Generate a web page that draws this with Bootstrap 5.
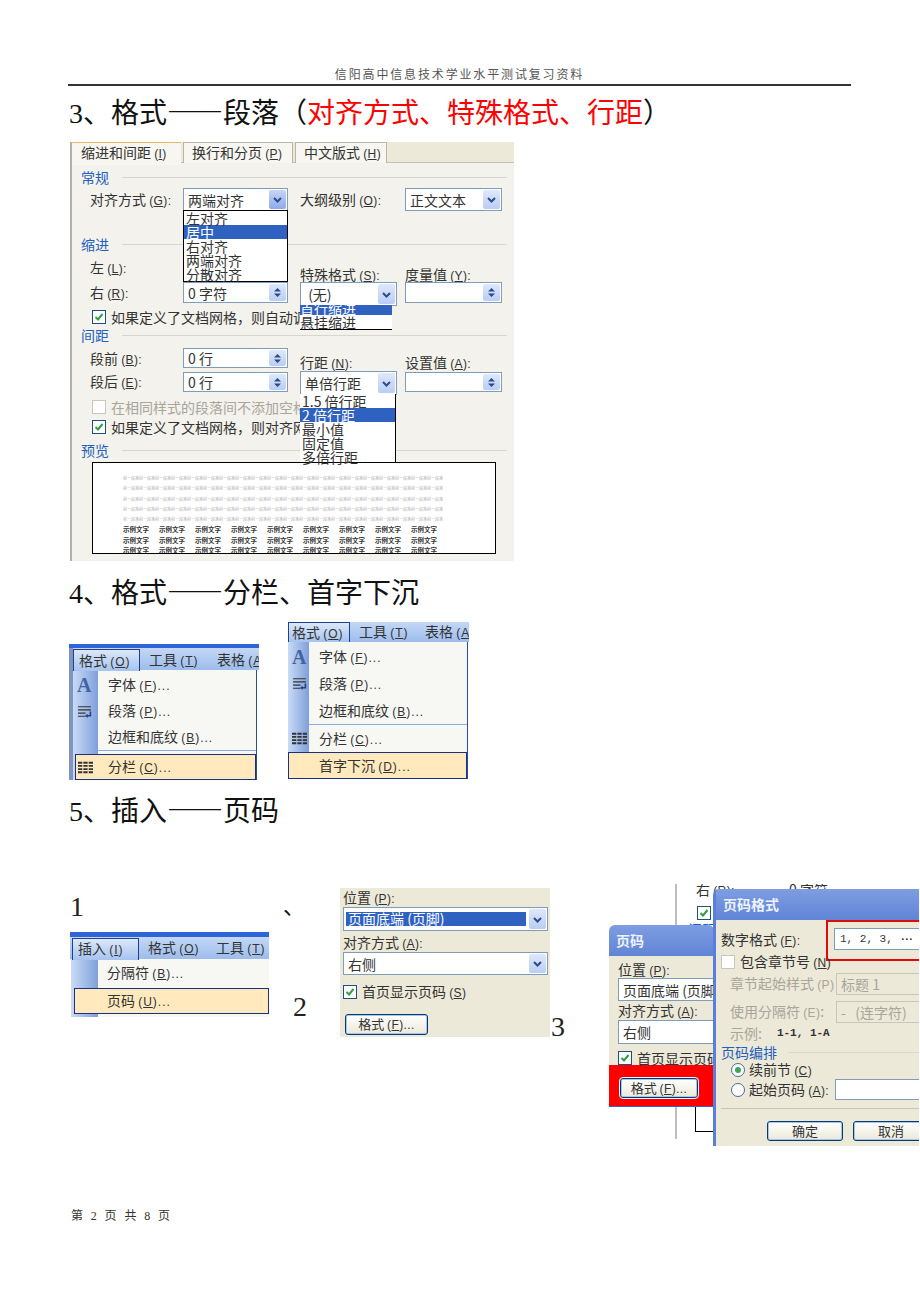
<!DOCTYPE html>
<html lang="zh">
<head>
  <meta charset="UTF-8">
  <title>信阳高中信息技术学业水平测试复习资料</title>
  <meta name="viewport" content="width=device-width, initial-scale=1">
  <link href="https://cdn.jsdelivr.net/npm/bootstrap@5.3.0/dist/css/bootstrap.min.css" rel="stylesheet">
  <style>
    body { background: #fff; color: #111; overflow-x: hidden; font-family: "Liberation Serif", "Noto Sans CJK SC", serif; }
    .page-wrap { width: 920px; min-height: 1302px; }
    .doc-head { height: 86px; margin: 0 69px 0 68px; padding-top: 66px; border-bottom: 2px solid #333; color: #555; font-size: 12px; line-height: 18px; letter-spacing: 1.85px; text-align: center; }
    .doc-h { margin: 0; padding-left: 69px; font-size: 28px; line-height: 40px; font-weight: 400; font-family: "Liberation Serif", "Noto Sans CJK SC", serif; }
    .doc-h-3 { margin-top: 5px; }
    .doc-h-4 { margin-top: 10px; }
    .doc-h-5 { margin-top: 9px; }
    .doc-dash { font-family: "Noto Sans CJK SC", sans-serif; }
    .doc-red { color: #f00; }
    .doc-foot { margin-top: 60px; padding-left: 71px; font-size: 12px; line-height: 20px; letter-spacing: 2.4px; color: #333; }
    .big-num { font-size: 28px; line-height: 28px; color: #222; }

    /* dialog pieces */
    .xp { font-family: "Noto Sans CJK SC", "Liberation Sans", sans-serif; font-size: 14px; line-height: 14px; color: #333; white-space: nowrap; }
    .hk { font-family: "Liberation Sans", sans-serif; font-size: 12px; letter-spacing: .4px; }
    .cbo { display: flex; align-items: center; background: #fff; border: 1px solid #7f9db9; position: relative; padding-left: 4px; }
    .cbo-btn { position: absolute; top: 1px; right: 1px; bottom: 1px; width: 17px; display: flex; align-items: center; justify-content: center; background: linear-gradient(#dfe8fb, #b9cdf5); border-radius: 2px; }
    .cbo-btn svg { width: 11px; height: 11px; }
    .cbo-hot { background: linear-gradient(#c6d5f8, #8fa9ea); }
    .ck { flex: none; width: 14px; height: 14px; border: 1px solid #1c5180; background: #fff; display: flex; align-items: center; justify-content: center; }
    .ck svg { width: 10px; height: 10px; }
    .ck-off { border-color: #c9c7bd; }
    .sec-row { display: flex; align-items: center; height: 14px; }
    .sec-name { width: 41px; flex: none; color: #1f5fbf; }
    .sec-line { flex-grow: 1; border-top: 1px solid #d8d6cd; }
    .tone-off { color: #a8a59b; }
    .xp-btn { padding: 0; border: 1px solid #003c74; border-radius: 3px; background: linear-gradient(#fff, #ece9d8); box-shadow: inset 0 0 0 1px #a9c4ee; font-size: 13px; line-height: 14px; color: #333; font-family: "Noto Sans CJK SC", sans-serif; }
    .sel-blue { background: #2f62c0; color: #fff; }

    /* paragraph dialog */
    .para-shot { width: 444px; height: 419px; margin-left: 70px; margin-top: 8px; overflow: hidden; background: #f3f2ec; border-left: 2px solid #b0b0b0; }
    .para-tabs { height: 21px; background: #ece9d8; border-bottom: 1px solid #c5c2b5; }
    .para-tab { height: 21px; padding: 2px 0 0 8px; margin-left: 2px; background: #f7f6f0; border: 1px solid #b8b6aa; border-bottom: 0; }
    .para-tab-on { height: 23px; margin-left: 0; padding: 2px 0 0 9px; background: #f7f6f0; border: 0; border-top: 1px solid #e9b96a; position: relative; }
    .tab-w1 { width: 109px; }
    .tab-w2 { width: 110px; }
    .tab-w3 { width: 92px; }
    .para-body { padding: 7px 7px 0 9px; }
    .pr { display: flex; padding-left: 9px; }
    .c1 { width: 93px; flex: none; }
    .c2 { width: 105px; flex: none; }
    .c3 { width: 97px; flex: none; margin-left: 12px; }
    .c4 { width: 97px; flex: none; margin-left: 8px; }
    .h-20 { height: 20px; }
    .h-21 { height: 21px; }
    .h-23 { height: 23px; }
    .h-24 { height: 24px; }
    .lh-20 { line-height: 20px; }
    .lh-23 { line-height: 23px; }
    .end-lab { padding-top: 7px; }
    .m1 { margin-top: 1px; }
    .m2 { margin-top: 2px; }
    .m3 { margin-top: 3px; }
    .m4 { margin-top: 4px; }
    .m5 { margin-top: 5px; }
    .m6 { margin-top: 6px; }
    .m7 { margin-top: 7px; }
    .m9 { margin-top: 9px; }
    .m26 { margin-top: 26px; }
    .m-sec { margin-top: 4px; }
    .ck-txt { margin-left: 5px; }
    .ck-row { display: flex; align-items: center; padding-left: 11px; height: 14px; }
    .ck-tall { height: 16px; }
    .pop { position: absolute; z-index: 3; background: #fff; left: -1px; top: 100%; }
    .pop-item { height: 14px; padding-left: 2px; line-height: 14px; }
    .pop-align { width: 105px; height: 72px; border: 1px solid #000; }
    .pop-special { width: 92px; height: 25px; border-bottom: 1px solid #000; overflow: hidden; }
    .pop-special .pop-clip { height: 10px; line-height: 6px; }
    .pop-special .pop-item { padding-left: 0; }
    .pop-space { width: 96px; height: 69px; border-right: 1px solid #000; border-bottom: 1px solid #000; }
    .prev-box { width: 404px; height: 92px; margin: 5px 0 0 11px; padding: 10px 0 0 30px; background: #fff; border: 1px solid #000; border-width: 1.5px; overflow: hidden; }
    .prev-gray { font-size: 4px; line-height: 10.3px; color: #b4b4b4; width: 324px; font-family: "Noto Sans CJK SC", sans-serif; white-space: nowrap; }
    .prev-dark { display: flex; font-size: 6.5px; line-height: 10.3px; color: #333; font-weight: 700; font-family: "Noto Sans CJK SC", sans-serif; white-space: nowrap; }
    .prev-dark span { width: 36px; flex: none; }

    /* office menus */
    .menu-row { display: flex; align-items: flex-end; margin-top: 7px; padding-left: 69px; gap: 28px; }
    .mn { overflow: hidden; position: relative; }
    .mn .hk { letter-spacing: 1px; }
    .mn-bar { display: flex; height: 22px; background: linear-gradient(#c4d8f6, #9dbcec); }
    .mn-tab { height: 22px; margin-top: 1px; padding: 3px 0 0 5px; background: linear-gradient(#dce8fa, #a6c3ef); border: 1px solid #1f3f8f; border-bottom: 0; flex: none; }
    .mn-top { padding-top: 4px; flex: none; }
    .mn-list { margin: 0; padding: 2px 0 0; list-style: none; border-right: 1px solid #2a4da0; background: linear-gradient(90deg, #c9dbf6, #7f9fdb var(--gut), #f7f7f4 var(--gut)); }
    .mn-item { display: flex; align-items: center; height: var(--item); }
    .mn-ico { flex: none; width: var(--ico); padding-left: 4px; display: flex; align-items: center; }
    .mn-a { font-family: "Liberation Serif", serif; font-weight: 700; font-size: 20px; color: #41649f; }
    .mn-ico svg { width: 15px; height: 15px; }
    .mn-sep { height: 1px; margin-left: var(--gut); background: #8faadc; }
    .mn-hot { background: #ffe9bd; border: 1px solid #1f2f80; margin-left: var(--hotm); }
    .mn-hot .mn-ico { width: var(--hoti); padding-left: 2px; }
    .fig-b { width: 190px; height: 136px; background: linear-gradient(90deg, #7f95bd 4px, #fff 4px); --item: 26px; --gut: 25px; --ico: 35px; --hotm: 2px; --hoti: 32px; }
    .fig-b .mn-top-band { height: 4px; background: #2f65d8; }
    .fig-b .mn-bar, .fig-b .mn-list { margin-left: 4px; }
    .fig-b .mn-list { margin-right: 2px; }
    .fig-c { width: 182px; height: 158px; margin-bottom: 1px; --item: 27px; --gut: 21px; --ico: 31px; --hotm: 0px; --hoti: 30px; padding-left: 1px; padding-top: 1px; }
    .fig-c .mn-bar { height: 20px; }
    .fig-c .mn-tab { height: 20px; margin-top: 0; padding-top: 2px; padding-left: 3px; }
    .fig-c .mn-top { padding-top: 2px; }
    .fig-c .mn-list { padding-top: 1px; margin-right: 1px; }
    .fig-d { width: 199px; height: 85px; margin-top: 11px; --item: 26px; --gut: 27px; --ico: 36px; --hotm: 3px; --hoti: 32px; }
    .fig-d .mn-top-band { height: 5px; background: #2f65d8; }
    .fig-d .mn-tab { margin-left: 2px; padding-top: 2px; }
    .fig-d .mn-top { padding-top: 3px; }
    .fig-d .mn-list { margin-left: 1px; padding-top: 1px; border-right: 0; height: 58px; }
    .w-tab1 { width: 67px; }
    .tool-1 { margin-left: 9px; width: 68px; }
    .fig-c .w-tab1 { width: 62px; }
    .fig-c .tool-1 { margin-left: 9px; width: 66px; }

    /* page number row */
    .pg-row { display: flex; margin-top: 52px; padding-left: 69px; height: 262px; }
    .pg-c1 { width: 199px; flex: none; padding-top: 9px; padding-left: 1px; }
    .pg-c2 { width: 72px; flex: none; position: relative; padding: 12px 0 0 15px; }
    .pg-two { margin-top: 75px; margin-left: 10px; }
    .pg-dun { font-size: 22px; line-height: 22px; }
    .fig-e { width: 210px; height: 149px; margin-top: 4px; flex: none; background: #ece9d8; padding: 2px 2px 0 3px; }
    .e-sel { width: 180px; height: 14px; margin-left: -2px; padding-left: 2px; line-height: 13px; }
    .e-btn { width: 83px; height: 21px; margin: 14px 0 0 2px; display: block; }
    .pg-three { width: 59px; flex: none; padding-top: 129px; padding-left: 1px; }
    .fig-f { width: 310px; height: 262px; flex: none; position: relative; overflow: hidden; }
    .win-back { position: absolute; left: 66px; top: 0; right: 0; bottom: 7px; background: #fff; border-left: 2px solid #bdbdbd; padding-left: 19px; }
    .back-clip { display: flex; margin-top: -2px; height: 12px; }
    .back-ck { margin-top: 12px; margin-left: 1px; }
    .back-sec { margin-top: 2px; margin-left: -8px; color: #1f5fbf; }
    .back-corner { position: absolute; left: 18px; top: 223px; width: 20px; height: 25px; border-left: 1px solid #000; border-bottom: 1px solid #000; }
    .win { position: absolute; overflow: hidden; background: #ece9d8; border-radius: 6px 6px 0 0; }
    .win-title { height: 31px; padding: 8px 0 0 7px; background: linear-gradient(#7e9de2, #6184d6); color: #eef3ff; font-weight: 700; }
    .win-pg { left: 0; top: 41px; width: 105px; height: 182px; border-bottom: 1px solid #3a5fc5; }
    .win-pg-body { padding: 6px 0 0 9px; height: 109px; }
    .win-cbo { width: 120px; }
    .win-red { height: 41px; background: #f00; padding: 13px 0 0 11px; }
    .win-red .xp-btn { display: block; width: 78px; height: 20px; outline: 1px solid #fff; }
    .win-fmt { left: 104px; top: 5px; width: 240px; height: 257px; border-left: 3px solid #5a7edc; }
    .fmt-body { padding-left: 5px; }
    .fmt-r1 { display: flex; height: 42px; }
    .fmt-lab { width: 105px; flex: none; }
    .fmt-lab-tall { line-height: 38px; }
    .red-box { width: 140px; height: 41px; border: 2px solid #e00a0a; padding: 6px; }
    .red-cbo { height: 22px; padding-left: 5px; font-family: "Liberation Mono", monospace; font-size: 11px; }
    .fmt-dots { letter-spacing: -2.5px; font-weight: 700; }
    .fmt-ck { display: flex; align-items: center; height: 14px; margin-top: -7px; }
    .fmt-r2 { display: flex; align-items: center; height: 22px; margin-top: 4px; padding-left: 9px; }
    .fmt-r3 { margin-top: 6px; }
    .fmt-lab-in { width: 106px; flex: none; }
    .fld-off { width: 110px; height: 22px; border: 1px solid #c8c5ba; padding: 3px 0 0 4px; }
    .fmt-ex { display: flex; margin-top: 3px; padding-left: 9px; height: 14px; }
    .fmt-ex-v { margin-left: 15px; font-family: "Liberation Mono", monospace; font-size: 11px; font-weight: 700; }
    .fmt-sec { margin-top: 5px; }
    .fmt-sec .sec-name { width: 67px; }
    .fmt-radio { display: flex; align-items: center; height: 16px; padding-left: 10px; margin-top: 3px; }
    .fmt-radio2 { height: 21px; margin-top: 1px; }
    .rd { flex: none; width: 14px; height: 14px; margin-right: 4px; border: 1px solid #4a6a9a; border-radius: 50%; background: #fff; display: flex; align-items: center; justify-content: center; }
    .rd i { width: 6px; height: 6px; border-radius: 50%; background: #3fa55a; }
    .rd-lab { width: 86px; flex: none; }
    .fld-in { width: 110px; height: 21px; background: #fff; border: 1px solid #7f9db9; }
    .fmt-sep { height: 1px; margin: 8px 0 0 5px; background: #c8c5ba; }
    .fmt-btns { display: flex; gap: 10px; margin: 12px 0 0 51px; }
    .fmt-btns .xp-btn { width: 76px; height: 20px; flex: none; }
  </style>
</head>
<body class="m-0">
  <svg class="d-none">
    <symbol id="chev" viewBox="0 0 11 11"><path d="M2 4l3.5 3.5L9 4" fill="none" stroke="#2b4a8f" stroke-width="2"/></symbol>
    <symbol id="spin" viewBox="0 0 11 11"><path d="M5.5 1L9 4.5H2zM5.5 10L2 6.5h7z" fill="#2b4a8f"/></symbol>
    <symbol id="tick" viewBox="0 0 10 10"><path d="M1.5 5l2.5 2.5L8.5 2" fill="none" stroke="#2f9e44" stroke-width="2"/></symbol>
    <symbol id="para" viewBox="0 0 14 14"><path d="M1 2.5h12M1 5.5h12M1 8.5h7M1 11.5h7" stroke="#333" fill="none"/><path d="M12.5 7v4H9" stroke="#24408e" fill="none" stroke-width="1.5"/><path d="M10 9l-2.5 2 2.5 2z" fill="#24408e"/></symbol>
    <symbol id="cols" viewBox="0 0 14 14"><path d="M0 2.5h4M5 2.5h4M10 2.5h4M0 5.5h4M5 5.5h4M10 5.5h4M0 8.5h4M5 8.5h4M10 8.5h4M0 11.5h4M5 11.5h4M10 11.5h4" stroke="#333" stroke-width="1.8" fill="none"/></symbol>
  </svg>

  <div class="page-wrap">
    <div class="doc-head">信阳高中信息技术学业水平测试复习资料</div>

    <h2 class="doc-h doc-h-3">3、格式<span class="doc-dash">——</span>段落（<span class="doc-red">对齐方式、特殊格式、行距</span>）</h2>

    <div class="para-shot xp">
      <div class="para-tabs d-flex">
        <div class="para-tab-on tab-w1">缩进和间距 <span class="hk">(<u>I</u>)</span></div>
        <div class="para-tab tab-w2">换行和分页 <span class="hk">(<u>P</u>)</span></div>
        <div class="para-tab tab-w3">中文版式 <span class="hk">(<u>H</u>)</span></div>
      </div>
      <div class="para-body">
        <div class="sec-row"><span class="sec-name">常规</span><span class="sec-line"></span></div>
        <div class="pr m-sec h-23">
          <div class="c1 lh-23">对齐方式 <span class="hk">(<u>G</u>):</span></div>
          <div class="c2 cbo">两端对齐
            <span class="cbo-btn cbo-hot"><svg><use href="#chev"/></svg></span>
            <div class="pop pop-align">
              <div class="pop-item">左对齐</div>
              <div class="pop-item sel-blue">居中</div>
              <div class="pop-item">右对齐</div>
              <div class="pop-item">两端对齐</div>
              <div class="pop-item">分散对齐</div>
            </div>
          </div>
          <div class="c3 lh-23">大纲级别 <span class="hk">(<u>O</u>):</span></div>
          <div class="c4 cbo">正文文本<span class="cbo-btn"><svg><use href="#chev"/></svg></span></div>
        </div>

        <div class="sec-row m26"><span class="sec-name">缩进</span><span class="sec-line"></span></div>
        <div class="pr m9 h-20">
          <div class="c1">左 <span class="hk">(<u>L</u>):</span></div>
          <div class="c2"></div>
          <div class="c3 end-lab">特殊格式 <span class="hk">(<u>S</u>):</span></div>
          <div class="c4 end-lab">度量值 <span class="hk">(<u>Y</u>):</span></div>
        </div>
        <div class="pr m2 h-24">
          <div class="c1 m3">右 <span class="hk">(<u>R</u>):</span></div>
          <div class="c2 cbo h-21">0 字符<span class="cbo-btn"><svg><use href="#spin"/></svg></span></div>
          <div class="c3 cbo">&nbsp;(无)
            <span class="cbo-btn"><svg><use href="#chev"/></svg></span>
            <div class="pop pop-special">
              <div class="pop-item pop-clip sel-blue">首行缩进</div>
              <div class="pop-item">悬挂缩进</div>
            </div>
          </div>
          <div class="c4 cbo h-21"><span class="cbo-btn"><svg><use href="#spin"/></svg></span></div>
        </div>
        <div class="ck-row ck-tall m3"><span class="ck"><svg><use href="#tick"/></svg></span><span class="ck-txt">如果定义了文档网格，则自动调</span></div>

        <div class="sec-row m3"><span class="sec-name">间距</span><span class="sec-line"></span></div>
        <div class="pr m6 h-20">
          <div class="c1 lh-20">段前 <span class="hk">(<u>B</u>):</span></div>
          <div class="c2 cbo">0 行<span class="cbo-btn"><svg><use href="#spin"/></svg></span></div>
          <div class="c3 end-lab">行距 <span class="hk">(<u>N</u>):</span></div>
          <div class="c4 end-lab">设置值 <span class="hk">(<u>A</u>):</span></div>
        </div>
        <div class="pr m3 h-24">
          <div class="c1 m3">段后 <span class="hk">(<u>E</u>):</span></div>
          <div class="c2 cbo h-20 m1">0 行<span class="cbo-btn"><svg><use href="#spin"/></svg></span></div>
          <div class="c3 cbo">单倍行距
            <span class="cbo-btn"><svg><use href="#chev"/></svg></span>
            <div class="pop pop-space">
              <div class="pop-item">1.5 倍行距</div>
              <div class="pop-item sel-blue">2 倍行距</div>
              <div class="pop-item">最小值</div>
              <div class="pop-item">固定值</div>
              <div class="pop-item">多倍行距</div>
            </div>
          </div>
          <div class="c4 cbo h-20 m1"><span class="cbo-btn"><svg><use href="#spin"/></svg></span></div>
        </div>
        <div class="ck-row m5 tone-off"><span class="ck ck-off"></span><span class="ck-txt">在相同样式的段落间不添加空格</span></div>
        <div class="ck-row m6"><span class="ck"><svg><use href="#tick"/></svg></span><span class="ck-txt">如果定义了文档网格，则对齐网</span></div>

        <div class="sec-row m9"><span class="sec-name">预览</span><span class="sec-line"></span></div>
        <div class="prev-box" id="previewBox"></div>
      </div>
    </div>

    <h2 class="doc-h doc-h-4">4、格式<span class="doc-dash">——</span>分栏、首字下沉</h2>

    <div class="menu-row">
      <div class="mn xp fig-b">
        <div class="mn-top-band"></div>
        <div class="mn-bar">
          <span class="mn-tab w-tab1">格式 <span class="hk">(<u>O</u>)</span></span>
          <span class="mn-top tool-1">工具 <span class="hk">(<u>T</u>)</span></span>
          <span class="mn-top">表格 <span class="hk">(<u>A</u></span></span>
        </div>
        <ul class="mn-list">
          <li class="mn-item"><span class="mn-ico mn-a">A</span><span>字体 <span class="hk">(<u>F</u>)...</span></span></li>
          <li class="mn-item"><span class="mn-ico"><svg><use href="#para"/></svg></span><span>段落 <span class="hk">(<u>P</u>)...</span></span></li>
          <li class="mn-item"><span class="mn-ico"></span><span>边框和底纹 <span class="hk">(<u>B</u>)...</span></span></li>
          <li class="mn-sep"></li>
          <li class="mn-item mn-hot m3"><span class="mn-ico"><svg><use href="#cols"/></svg></span><span>分栏 <span class="hk">(<u>C</u>)...</span></span></li>
        </ul>
      </div>
      <div class="mn xp fig-c">
        <div class="mn-bar">
          <span class="mn-tab w-tab1">格式 <span class="hk">(<u>O</u>)</span></span>
          <span class="mn-top tool-1">工具 <span class="hk">(<u>T</u>)</span></span>
          <span class="mn-top">表格 <span class="hk">(<u>A</u></span></span>
        </div>
        <ul class="mn-list">
          <li class="mn-item"><span class="mn-ico mn-a">A</span><span>字体 <span class="hk">(<u>F</u>)...</span></span></li>
          <li class="mn-item"><span class="mn-ico"><svg><use href="#para"/></svg></span><span>段落 <span class="hk">(<u>P</u>)...</span></span></li>
          <li class="mn-item"><span class="mn-ico"></span><span>边框和底纹 <span class="hk">(<u>B</u>)...</span></span></li>
          <li class="mn-sep"></li>
          <li class="mn-item"><span class="mn-ico"><svg><use href="#cols"/></svg></span><span>分栏 <span class="hk">(<u>C</u>)...</span></span></li>
          <li class="mn-item mn-hot"><span class="mn-ico"></span><span>首字下沉 <span class="hk">(<u>D</u>)...</span></span></li>
        </ul>
      </div>
    </div>

    <h2 class="doc-h doc-h-5">5、插入<span class="doc-dash">——</span>页码</h2>

    <div class="pg-row">
      <div class="pg-c1">
        <div class="big-num">1</div>
        <div class="mn xp fig-d">
          <div class="mn-top-band"></div>
          <div class="mn-bar">
            <span class="mn-tab w-tab1">插入 <span class="hk">(<u>I</u>)</span></span>
            <span class="mn-top tool-1">格式 <span class="hk">(<u>O</u>)</span></span>
            <span class="mn-top">工具 <span class="hk">(<u>T</u>)</span></span>
          </div>
          <ul class="mn-list">
            <li class="mn-item"><span class="mn-ico"></span><span>分隔符 <span class="hk">(<u>B</u>)...</span></span></li>
            <li class="mn-item mn-hot m2"><span class="mn-ico"></span><span>页码 <span class="hk">(<u>U</u>)...</span></span></li>
          </ul>
        </div>
      </div>
      <div class="pg-c2">
        <div class="pg-dun">、</div>
        <div class="big-num pg-two">2</div>
      </div>
      <div class="fig-e xp">
        <div>位置 <span class="hk">(<u>P</u>):</span></div>
        <div class="cbo h-24 m1">
          <span class="e-sel sel-blue">页面底端 (页脚)</span>
          <span class="cbo-btn"><svg><use href="#chev"/></svg></span>
        </div>
        <div class="m4">对齐方式 <span class="hk">(<u>A</u>):</span></div>
        <div class="cbo h-23 m1">右侧<span class="cbo-btn"><svg><use href="#chev"/></svg></span></div>
        <div class="d-flex align-items-center m9"><span class="ck"><svg><use href="#tick"/></svg></span><span class="ck-txt">首页显示页码 <span class="hk">(<u>S</u>)</span></span></div>
        <button class="btn xp-btn e-btn" type="button">格式 <span class="hk">(<u>F</u>)...</span></button>
      </div>
      <div class="pg-three"><div class="big-num">3</div></div>

      <div class="fig-f xp">
        <div class="win-back">
          <div class="back-clip"><span class="c1">右 <span class="hk">(<u>R</u>):</span></span><span>0 字符</span></div>
          <div class="ck back-ck"><svg><use href="#tick"/></svg></div>
          <div class="back-sec">间距</div>
          <div class="back-corner"></div>
        </div>

        <div class="win win-pg">
          <div class="win-title">页码</div>
          <div class="win-pg-body">
            <div>位置 <span class="hk">(<u>P</u>):</span></div>
            <div class="cbo win-cbo h-23">页面底端 (页脚)</div>
            <div class="m2">对齐方式 <span class="hk">(<u>A</u>):</span></div>
            <div class="cbo win-cbo h-24 m1">右侧</div>
            <div class="d-flex align-items-center m7"><span class="ck"><svg><use href="#tick"/></svg></span><span class="ck-txt">首页显示页码</span></div>
          </div>
          <div class="win-red"><button class="btn xp-btn" type="button">格式 <span class="hk">(<u>F</u>)...</span></button></div>
        </div>

        <div class="win win-fmt">
          <div class="win-title">页码格式</div>
          <div class="fmt-body">
            <div class="fmt-r1">
              <div class="fmt-lab fmt-lab-tall">数字格式 <span class="hk">(<u>F</u>):</span></div>
              <div class="red-box"><div class="cbo red-cbo"><span>1, 2, 3, <span class="fmt-dots">···</span></span></div></div>
            </div>
            <div class="fmt-ck"><span class="ck ck-off"></span><span class="ck-txt">包含章节号 <span class="hk">(<u>N</u>)</span></span></div>
            <div class="fmt-r2 tone-off"><span class="fmt-lab-in">章节起始样式 <span class="hk">(P)</span></span><span class="fld-off">标题 1</span></div>
            <div class="fmt-r2 fmt-r3 tone-off"><span class="fmt-lab-in">使用分隔符 <span class="hk">(E)</span>:</span><span class="fld-off">-&nbsp;&nbsp;&nbsp;(连字符)</span></div>
            <div class="fmt-ex"><span class="tone-off">示例:</span><span class="fmt-ex-v">1-1, 1-A</span></div>
            <div class="sec-row fmt-sec"><span class="sec-name">页码编排</span><span class="sec-line"></span></div>
            <div class="fmt-radio"><span class="rd"><i></i></span><span>续前节 <span class="hk">(<u>C</u>)</span></span></div>
            <div class="fmt-radio fmt-radio2"><span class="rd"></span><span class="rd-lab">起始页码 <span class="hk">(<u>A</u>):</span></span><span class="fld-in"></span></div>
          </div>
          <div class="fmt-sep"></div>
          <div class="fmt-btns">
            <button class="btn xp-btn" type="button">确定</button>
            <button class="btn xp-btn" type="button">取消</button>
          </div>
        </div>
      </div>
    </div>

    <div class="doc-foot">第 2 页 共 8 页</div>
  </div>

  <script src="https://cdn.jsdelivr.net/npm/bootstrap@5.3.0/dist/js/bootstrap.bundle.min.js"></script>
  <script>
    // preview text in the paragraph dialog
    var box = document.getElementById("previewBox");
    var html = "";
    for (var i = 0; i < 5; i++) {
      html += '<div class="prev-gray">' + "前一段落".repeat(20) + "</div>";
    }
    for (var j = 0; j < 3; j++) {
      html += '<div class="prev-dark">' + "<span>示例文字</span>".repeat(9) + "</div>";
    }
    box.innerHTML = html;
  </script>
</body>
</html>
